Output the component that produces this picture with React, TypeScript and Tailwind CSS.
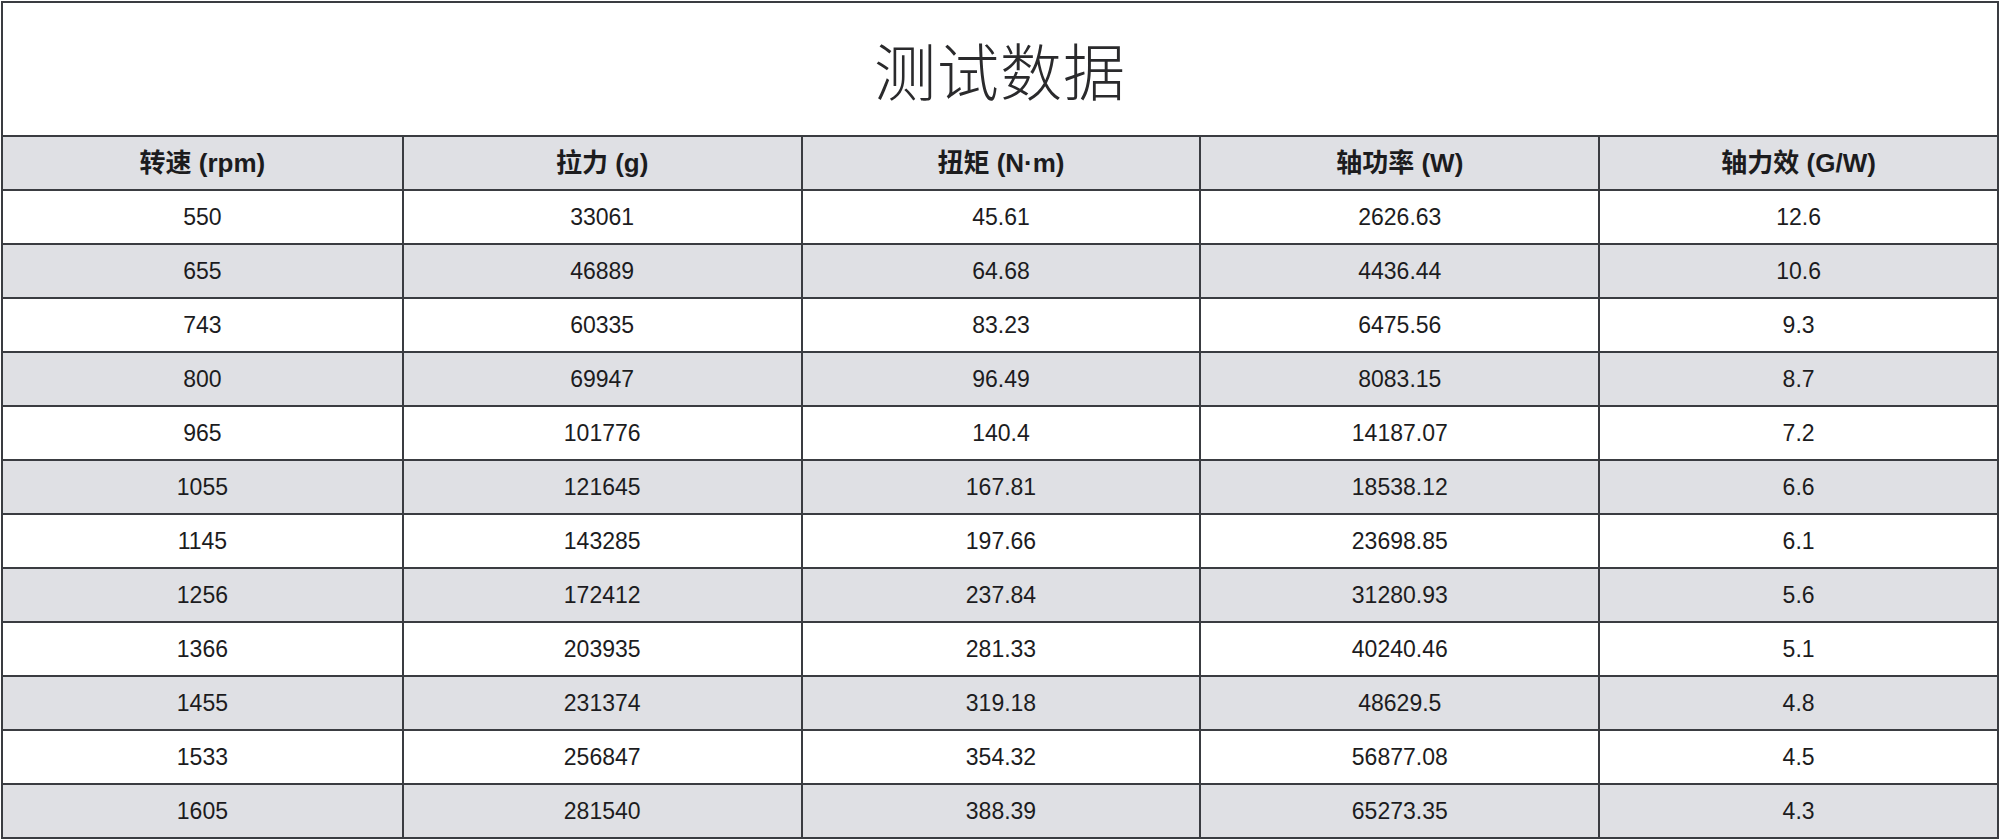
import React from "react";

const COLUMNS = ["转速 (rpm)", "拉力 (g)", "扭矩 (N·m)", "轴功率 (W)", "轴力效 (G/W)"];

const ROWS: string[][] = [
  ["550", "33061", "45.61", "2626.63", "12.6"],
  ["655", "46889", "64.68", "4436.44", "10.6"],
  ["743", "60335", "83.23", "6475.56", "9.3"],
  ["800", "69947", "96.49", "8083.15", "8.7"],
  ["965", "101776", "140.4", "14187.07", "7.2"],
  ["1055", "121645", "167.81", "18538.12", "6.6"],
  ["1145", "143285", "197.66", "23698.85", "6.1"],
  ["1256", "172412", "237.84", "31280.93", "5.6"],
  ["1366", "203935", "281.33", "40240.46", "5.1"],
  ["1455", "231374", "319.18", "48629.5", "4.8"],
  ["1533", "256847", "354.32", "56877.08", "4.5"],
  ["1605", "281540", "388.39", "65273.35", "4.3"],
];

const font = { fontFamily: '"Liberation Sans", Arial, "Noto Sans CJK SC", sans-serif' };

export default function App() {
  return (
    <div className="w-[2000px] h-[840px] bg-white p-px text-[#1c1c1e]" style={font}>
      <div className="h-[838px] border-2 border-[#3a3c41] flex flex-col">
        {/* Title */}
        <div className="h-[134px] flex items-center justify-center border-b-2 border-[#3a3c41]">
          <h1
            className="text-[62px] font-light tracking-[1px] leading-none text-[#2a2a2c]"
            style={{ fontFamily: '"Noto Sans CJK SC", sans-serif' }}
          >
            测试数据
          </h1>
        </div>

        {/* Header */}
        <div className="grid grid-cols-5 h-[54px] bg-[#dfe0e4] border-b-2 border-[#3a3c41]">
          {COLUMNS.map((c, i) => (
            <div
              key={c}
              className={`flex items-center justify-center text-[26px] font-bold ${i > 0 ? "border-l-2 border-[#3a3c41]" : ""}`}
            >
              {c}
            </div>
          ))}
        </div>

        {/* Body */}
        {ROWS.map((row, r) => (
          <div
            key={row[0]}
            className={`grid grid-cols-5 h-[54px] ${r % 2 === 1 ? "bg-[#dfe0e4]" : "bg-white"} ${r < ROWS.length - 1 ? "border-b-2 border-[#3a3c41]" : "flex-1"}`}
          >
            {row.map((v, i) => (
              <div
                key={i}
                className={`flex items-center justify-center text-[23px] ${i > 0 ? "border-l-2 border-[#3a3c41]" : ""}`}
              >
                {v}
              </div>
            ))}
          </div>
        ))}
      </div>
    </div>
  );
}
